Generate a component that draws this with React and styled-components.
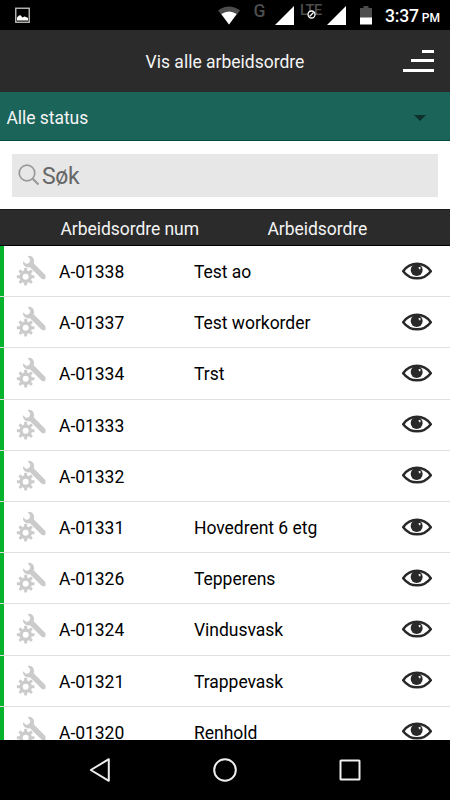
import React from "react";
import styled, { createGlobalStyle } from "styled-components";

const orders = [
	{ num: "A-01338", name: "Test ao" },
	{ num: "A-01337", name: "Test workorder" },
	{ num: "A-01334", name: "Trst" },
	{ num: "A-01333", name: "" },
	{ num: "A-01332", name: "" },
	{ num: "A-01331", name: "Hovedrent 6 etg" },
	{ num: "A-01326", name: "Tepperens" },
	{ num: "A-01324", name: "Vindusvask" },
	{ num: "A-01321", name: "Trappevask" },
	{ num: "A-01320", name: "Renhold" },
];

const teeth = [0, 45, 90, 135, 180, 225, 270, 315];

const ToolsIcon = () => (
	<svg width="30" height="32" viewBox="48 30 90 96" fill="#cbcbcb">
		<path d="M83 33 Q94 31 100 39 Q104 47 101 55 L136 90 Q138 97 136 101 Q131 105 125 101 L90 67 Q80 69 73 62 Q68 57 69 49 L79 57 L88 53 L91 44 Z" />
		<circle cx="77" cy="95" r="14" fill="none" stroke="#cbcbcb" strokeWidth="10" />
		{teeth.map((angle) => (
			<rect key={angle} x="72.5" y="68.5" width="9" height="10" rx="2" transform={`rotate(${angle} 77 95)`} />
		))}
	</svg>
);

const EyeIcon = () => (
	<svg width="30" height="18" viewBox="35 33 90 54">
		<path d="M38.5 60.5 Q55 38.5 80 38.5 Q105 38.5 121.5 60.5 Q105 82 80 82 Q55 82 38.5 60.5 Z" fill="#fff" stroke="#292929" strokeWidth="7.5" strokeLinejoin="round" />
		<circle cx="79" cy="57" r="18" fill="#292929" />
		<path d="M84.5 48 L90.5 48 L90.5 54.5 L86 54.5 Z" fill="#eee" />
	</svg>
);

const PictureIcon = () => (
	<svg width="16" height="17" viewBox="0 0 16 17">
		<rect x="0.75" y="1.25" width="13.5" height="14" fill="none" stroke="#b9b9b5" strokeWidth="1.4" />
		<path d="M2 13.5 V10.5 L4 8.5 L5.5 8.3 L7.5 10.5 L9.5 9.5 L11 10 L13 11 V13.5 Z" fill="#fff" />
	</svg>
);

const WifiIcon = () => (
	<svg width="22" height="19" viewBox="0 0 22 19">
		<path d="M0 4.5 Q11 -3.5 22 4.5 L11 18.5 Z" fill="#4d4d4d" />
		<path d="M3.3 8 Q11 2.8 18.7 8 L11 18.5 Z" fill="#fff" />
	</svg>
);

const SignalIcon = () => (
	<svg width="19" height="19" viewBox="0 0 19 19">
		<path d="M0 19 L19 0 V19 Z" fill="#fff" />
	</svg>
);

const BlockedIcon = () => (
	<svg width="9" height="9" viewBox="0 0 9 9">
		<circle cx="4.5" cy="4.5" r="3.5" fill="#000" stroke="#fff" strokeWidth="1.3" />
		<path d="M2.5 6.5 L6.5 2.5" stroke="#fff" strokeWidth="1.2" />
	</svg>
);

const BatteryIcon = () => (
	<svg width="12" height="19" viewBox="0 0 12 19">
		<path d="M0 2 H3.5 V0 H8.5 V2 H12 V12 H0 Z" fill="#4d4d4d" />
		<rect y="11.5" width="12" height="7" fill="#fff" />
	</svg>
);

const App = () => {
	return (
		<Screen>
			<GlobalStyle />
			<StatusBar>
				<PictureIcon />
				<StatusIcons>
					<WifiIcon />
					<Network $width={35} $left={13.5} $size={17.5} $weight={500}>G</Network>
					<SignalIcon />
					<Network $width={33} $left={6} $size={14.5} $weight={500}>
						LTE
						<Blocked><BlockedIcon /></Blocked>
					</Network>
					<SignalIcon />
					<Battery><BatteryIcon /></Battery>
				</StatusIcons>
				<Clock>
					<Time>3:37</Time>
					<Period>PM</Period>
				</Clock>
			</StatusBar>
			<Header>
				<Title>Vis alle arbeidsordre</Title>
				<MenuButton aria-label="Meny">
					<MenuLine $width={12} />
					<MenuLine $width={23} />
					<MenuLine $width={31} />
				</MenuButton>
			</Header>
			<StatusFilter>
				<span>Alle status</span>
				<svg width="12" height="6" viewBox="0 0 12 6">
					<path d="M0 0 H12 L6 6 Z" fill="#0d302b" />
				</svg>
			</StatusFilter>
			<SearchArea>
				<SearchBox>
					<svg width="22" height="22" viewBox="0 0 22 22" fill="none" stroke="#999">
						<circle cx="9" cy="9" r="7.8" strokeWidth="1.7" />
						<path d="M14.5 14.5 L20.5 20.5" strokeWidth="2.2" />
					</svg>
					<span>Søk</span>
				</SearchBox>
			</SearchArea>
			<TableHead>
				<HeadCell>Arbeidsordre num</HeadCell>
				<HeadCell>Arbeidsordre</HeadCell>
			</TableHead>
			<List>
				{orders.map((order) => (
					<Row key={order.num}>
						<ToolsIcon />
						<Cell>{order.num}</Cell>
						<Cell>{order.name}</Cell>
						<ViewButton aria-label="Vis"><EyeIcon /></ViewButton>
					</Row>
				))}
			</List>
			<NavBar>
				<svg width="24" height="26" viewBox="0 0 24 26">
					<path d="M20.8 2.2 V23.8 L2.8 13 Z" fill="none" stroke="#eee" strokeWidth="2" strokeLinejoin="round" />
				</svg>
				<svg width="26" height="26" viewBox="0 0 26 26">
					<circle cx="13" cy="13" r="10.8" fill="none" stroke="#eee" strokeWidth="2" />
				</svg>
				<svg width="24" height="24" viewBox="0 0 24 24">
					<rect x="2.5" y="2.5" width="19" height="19" rx="0.5" fill="none" stroke="#eee" strokeWidth="2" />
				</svg>
			</NavBar>
		</Screen>
	);
};

export default App;

const GlobalStyle = createGlobalStyle`
	* {
		box-sizing: border-box;
	}
	body {
		margin: 0;
		font-family: Roboto, sans-serif;
	}
	svg {
		display: block;
		flex-shrink: 0;
	}
	button {
		border: none;
		padding: 0;
		background: none;
	}
`;

const Screen = styled.div`
	display: flex;
	flex-direction: column;
	width: 450px;
	height: 800px;
	overflow: hidden;
	background-color: #fff;
`;

const StatusBar = styled.div`
	display: flex;
	flex-shrink: 0;
	align-items: center;
	height: 30px;
	padding: 0 10px 0 15px;
	background-color: #000;
	color: #fff;
`;

const StatusIcons = styled.div`
	display: flex;
	align-items: flex-start;
	height: 19px;
	margin: 1px 0 0 187px;
`;

const Network = styled.div`
	position: relative;
	width: ${(props) => props.$width}px;
	padding-left: ${(props) => props.$left}px;
	margin-top: -4px;
	font-size: ${(props) => props.$size}px;
	font-weight: ${(props) => props.$weight};
	line-height: 18px;
	letter-spacing: -0.5px;
	color: #4d4d4d;
`;

const Blocked = styled.span`
	position: absolute;
	left: 13px;
	top: 8px;
`;

const Battery = styled.div`
	margin-left: 14px;
`;

const Clock = styled.div`
	display: flex;
	align-items: baseline;
	gap: 3px;
	margin: 1px 0 0 auto;
	font-weight: 500;
`;

const Time = styled.span`
	font-size: 17.6px;
	letter-spacing: -0.2px;
`;

const Period = styled.span`
	font-size: 12px;
`;

const Header = styled.header`
	position: relative;
	display: flex;
	flex-shrink: 0;
	align-items: center;
	justify-content: center;
	height: 62px;
	background-color: #2b2b2b;
`;

const Title = styled.h1`
	margin: 2px 0 0;
	font-size: 17.5px;
	font-weight: 400;
	color: #f4f4f4;
`;

const MenuButton = styled.button`
	position: absolute;
	top: 20px;
	right: 16px;
	display: flex;
	flex-direction: column;
	align-items: flex-end;
	gap: 6.4px;
`;

const MenuLine = styled.span`
	width: ${(props) => props.$width}px;
	height: 3px;
	background-color: #fff;
`;

const StatusFilter = styled.div`
	display: flex;
	flex-shrink: 0;
	align-items: center;
	justify-content: space-between;
	height: 49px;
	padding: 3px 24px 0 6.5px;
	border-bottom: 1px solid #004d40;
	background-color: #1b645a;
	font-size: 17.5px;
	letter-spacing: -0.05px;
	color: #f4f4f4;
`;

const SearchArea = styled.div`
	flex-shrink: 0;
	height: 68px;
	padding: 13px 12px 0;
`;

const SearchBox = styled.div`
	display: flex;
	align-items: center;
	gap: 2px;
	height: 43px;
	padding-left: 6px;
	background-color: #e7e7e7;
	font-size: 23px;
	letter-spacing: -0.3px;
	color: #666;
	svg {
		margin-top: -1px;
	}
	span {
		margin-top: 2px;
	}
`;

const TableHead = styled.div`
	display: grid;
	flex-shrink: 0;
	grid-template-columns: 207px 1fr;
	align-items: center;
	height: 37px;
	padding: 2px 0 0 60.5px;
	border-top: 1px solid #1a1a1a;
	border-bottom: 1px solid #000;
	background-color: #2b2b2b;
`;

const HeadCell = styled.div`
	font-size: 17.5px;
	letter-spacing: -0.05px;
	color: #f4f4f4;
`;

const List = styled.div`
	flex: 1;
	min-height: 0;
	overflow: hidden;
`;

const Row = styled.div`
	display: grid;
	grid-template-columns: 39px 135px 1fr 30px;
	align-items: center;
	height: 51.2px;
	padding: 0 18px 0 16px;
	border-bottom: 1.5px solid #dfdfdf;
	background: linear-gradient(to right, #04b22b 3.6px, #fff 3.6px);
`;

const Cell = styled.div`
	padding: 2px 0 0 4px;
	font-size: 17.5px;
	letter-spacing: -0.03px;
	color: #000;
`;

const ViewButton = styled.button`
	margin-bottom: 1px;
`;

const NavBar = styled.nav`
	display: flex;
	flex-shrink: 0;
	align-items: center;
	justify-content: space-between;
	height: 60px;
	padding: 0 88px;
	background-color: #000;
`;
